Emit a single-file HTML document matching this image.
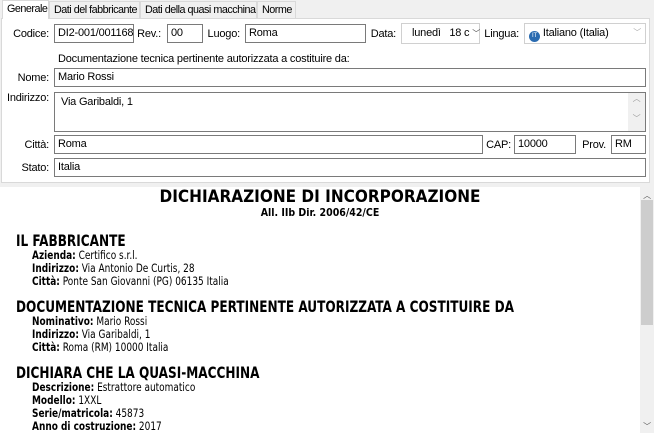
<!DOCTYPE html>
<html><head><meta charset="utf-8"><style>
*{box-sizing:border-box;margin:0;padding:0}
body{width:654px;height:433px;overflow:hidden;background:#f0f0f0;font-family:"Liberation Sans",sans-serif;font-size:11px;letter-spacing:-0.2px;color:#000;position:relative}
.a{position:absolute;white-space:nowrap}
.tab{position:absolute;top:1px;height:17px;border:1px solid #d9d9d9;border-bottom:none;background:#f0f0f0;padding:2px 0 0 4px;white-space:nowrap;overflow:hidden;letter-spacing:-0.5px;font-size:10.8px}
.sel{top:0;height:19px;background:#fff;z-index:2}
.panel{position:absolute;left:1px;top:18px;width:649px;height:165px;background:#fff;border:1px solid #d9d9d9}
.in{position:absolute;height:19px;border:1px solid #7a7a7a;background:#fff;padding:2px 3px;white-space:nowrap;overflow:hidden}
.lb{position:absolute;white-space:nowrap;text-align:right}
.dd{position:absolute;height:21px;border:1px solid #d0d0d0;background:#fff;padding:3px 5px;white-space:nowrap}
.doc{position:absolute;left:0;top:187px;width:640px;height:246px;background:#fff;font-family:"DejaVu Sans Condensed","DejaVu Sans",sans-serif;letter-spacing:0}
.h{position:absolute;left:16px;font-weight:bold;font-size:16px;white-space:nowrap;transform:scaleX(0.84);transform-origin:0 0}
.l{position:absolute;left:32px;font-size:11.6px;white-space:nowrap;transform:scaleX(0.86);transform-origin:0 0}
</style></head><body>
<div class="tab sel" style="left:2px;width:47px">Generale</div>
<div class="tab" style="left:49px;width:91px">Dati del fabbricante</div>
<div class="tab" style="left:140px;width:117px">Dati della quasi macchina</div>
<div class="tab" style="left:257px;width:39px">Norme</div>
<div class="panel"></div>

<div class="lb" style="right:605px;top:28px">Codice:</div>
<div class="in" style="left:54px;top:24px;width:80px">DI2-001/001168</div>
<div class="lb" style="right:493px;top:28px">Rev.:</div>
<div class="in" style="left:167px;top:24px;width:36px">00</div>
<div class="lb" style="right:414px;top:28px">Luogo:</div>
<div class="in" style="left:245px;top:24px;width:121px">Roma</div>
<div class="lb" style="right:258px;top:28px">Data:</div>
<div class="dd" style="left:401px;top:23px;width:79px;padding-left:10px">lunedì &nbsp; 18 c <span style="font-size:8px;color:#444">﹀</span></div>
<div class="lb" style="right:135px;top:28px">Lingua:</div>
<div class="dd" style="left:524px;top:23px;width:122px;padding-left:4px"><span style="display:inline-block;width:11px;height:11px;border-radius:50%;background:#2a6bb0;color:#fff;font-size:6px;text-align:center;line-height:11px;vertical-align:-1px">IT</span> Italiano (Italia)<span style="position:absolute;right:4px;top:3px;font-size:8px;color:#aaa">﹀</span></div>

<div class="lb" style="left:58px;top:53px">Documentazione tecnica pertinente autorizzata a costituire da:</div>
<div class="lb" style="right:605px;top:72px">Nome:</div>
<div class="in" style="left:54px;top:68px;width:592px">Mario Rossi</div>
<div class="lb" style="right:605px;top:92px">Indirizzo:</div>
<div class="in" style="left:54px;top:92px;width:592px;height:40px;padding:3px 6px">Via Garibaldi, 1</div>
<div class="a" style="left:628px;top:93px;width:17px;height:38px;background:#f0f0f0;font-size:8px;color:#999;text-align:center">︿<br><br>﹀</div>
<div class="lb" style="right:605px;top:139px">Città:</div>
<div class="in" style="left:54px;top:135px;width:429px">Roma</div>
<div class="lb" style="right:143px;top:139px">CAP:</div>
<div class="in" style="left:514px;top:135px;width:62px">10000</div>
<div class="lb" style="right:48px;top:139px">Prov.</div>
<div class="in" style="left:611px;top:135px;width:35px">RM</div>
<div class="lb" style="right:605px;top:162px">Stato:</div>
<div class="in" style="left:54px;top:158px;width:592px">Italia</div>

<div class="doc">
<div class="a" style="left:0;width:640px;top:0;text-align:center;font-weight:bold;font-size:17px">DICHIARAZIONE DI INCORPORAZIONE</div>
<div class="a" style="left:0;width:640px;top:20px;text-align:center;font-weight:bold;font-size:10.5px">All. IIb Dir. 2006/42/CE</div>
<div class="h" style="top:44px">IL FABBRICANTE</div>
<div class="l" style="top:61px"><b>Azienda:</b> Certifico s.r.l.</div>
<div class="l" style="top:74px"><b>Indirizzo:</b> Via Antonio De Curtis, 28</div>
<div class="l" style="top:87px"><b>Città:</b> Ponte San Giovanni (PG) 06135 Italia</div>
<div class="h" style="top:110px">DOCUMENTAZIONE TECNICA PERTINENTE AUTORIZZATA A COSTITUIRE DA</div>
<div class="l" style="top:127px"><b>Nominativo:</b> Mario Rossi</div>
<div class="l" style="top:140px"><b>Indirizzo:</b> Via Garibaldi, 1</div>
<div class="l" style="top:153px"><b>Città:</b> Roma (RM) 10000 Italia</div>
<div class="h" style="top:176px">DICHIARA CHE LA QUASI-MACCHINA</div>
<div class="l" style="top:193px"><b>Descrizione:</b> Estrattore automatico</div>
<div class="l" style="top:206px"><b>Modello:</b> 1XXL</div>
<div class="l" style="top:219px"><b>Serie/matricola:</b> 45873</div>
<div class="l" style="top:232px"><b>Anno di costruzione:</b> 2017</div>
</div>
<div class="a" style="left:640px;top:187px;width:14px;height:246px;background:#f0f0f0"></div>
<div class="a" style="left:641px;top:200px;width:12px;height:125px;background:#cdcdcd"></div>
<div class="a" style="left:640px;top:190px;width:14px;font-size:8px;color:#555;text-align:center">︿</div>
<div class="a" style="left:640px;top:421px;width:14px;font-size:8px;color:#555;text-align:center">﹀</div>
</body></html>
